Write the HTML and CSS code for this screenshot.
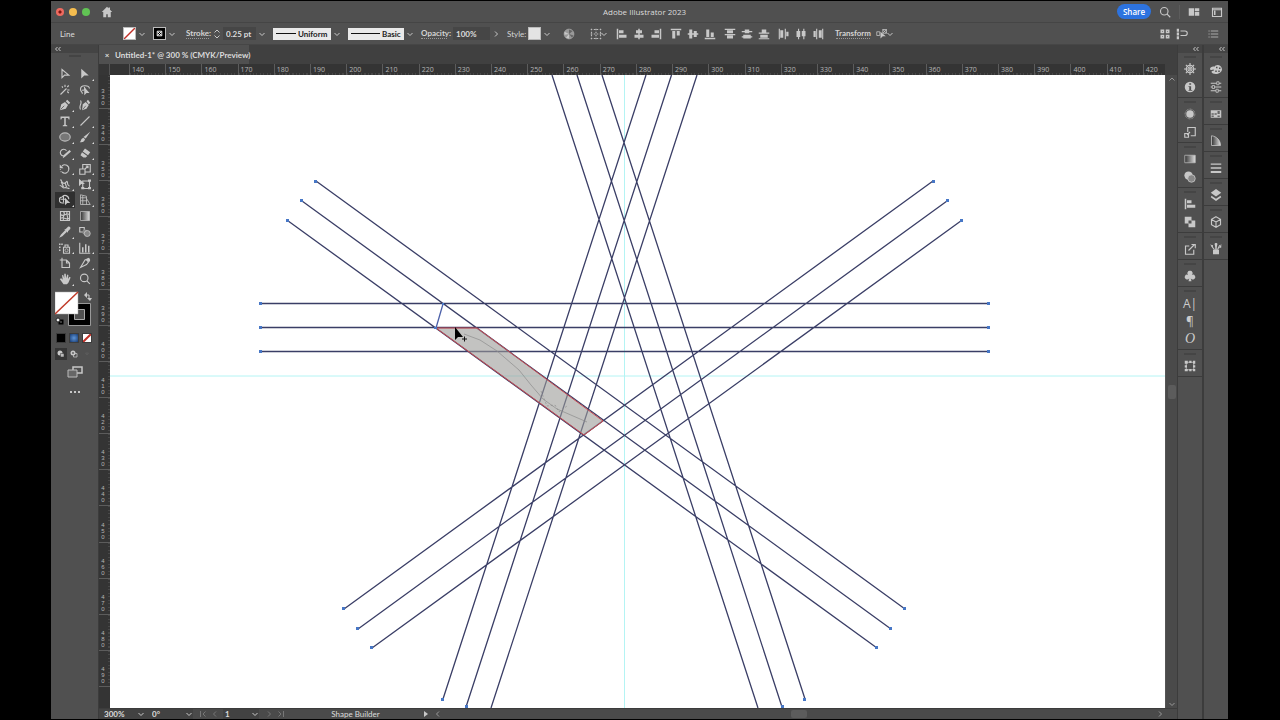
FILE: index.html
```html
<!DOCTYPE html>
<html lang="en">
<head>
<meta charset="utf-8">
<title>Adobe Illustrator 2023</title>
<link rel="stylesheet" href="styles.css">
</head>
<body>
<svg class="defs" aria-hidden="true">
  <symbol id="chev" viewBox="0 0 8 8"><path class="s" d="M1.5 3 4 5.5 6.5 3"/></symbol>
  <symbol id="next" viewBox="0 0 8 8"><path class="s" d="M3 1.5 5.5 4 3 6.5"/></symbol>
  <symbol id="up" viewBox="0 0 8 8"><path class="s" d="M1.5 5.500 4 3l2.500 2.500"/></symbol>
  <symbol id="prev" viewBox="0 0 8 8"><path class="s" d="M5 1.5 2.5 4 5 6.5"/></symbol>
  <symbol id="first" viewBox="0 0 8 8"><path class="s" d="M1.5 1v6M6.5 1.5 4 4l2.500 2.500"/></symbol>
  <symbol id="last" viewBox="0 0 8 8"><path class="s" d="M6.500 1v6M1.500 1.500 4 4 1.500 6.500"/></symbol>
  <symbol id="spin" viewBox="0 0 8 12"><path class="s" d="M1.500 4.500 4 2l2.500 2.500M1.500 7.500 4 10l2.500-2.500"/></symbol>
  <symbol id="dbl" viewBox="0 0 8 8"><path class="s" d="M3.500 2 1.500 4l2 2M6.500 2l-2 2 2 2"/></symbol>
</svg>
<div class="app">
  <header class="titlebar">
    <div class="titleleft">
      <div class="lights"><i class="red"></i><i class="amber"></i><i class="green"></i></div>
      <button class="ib home" aria-label="Home"><svg viewBox="0 0 16 16"><path class="f" d="M8 1 1 8h2v7h4v-4h2v4h4V8h2L12 5V2h-2v1z"/></svg></button>
    </div>
    <h1>Adobe Illustrator 2023</h1>
    <div class="titleright">
      <button class="share">Share</button>
      <button class="ib" aria-label="Search"><svg viewBox="0 0 16 16"><circle class="s2" cx="7" cy="7" r="5"/><path class="s2" d="m10.500 10.500 4.500 4.500"/></svg></button>
      <i class="rule"></i>
      <button class="ib" aria-label="Arrange documents"><svg viewBox="0 0 16 16"><path class="f" d="M1 3h7v10H1zM9 3h6v4H9zM9 8h6v5H9z"/></svg></button>
      <button class="ib" aria-label="Workspace"><svg viewBox="0 0 16 16"><path class="s2" d="M2 3h12v11H2zM2 5h12"/><path class="f" d="M4 6h2v6H4z"/></svg></button>
    </div>
  </header>

  <div class="options">
    <span class="kind">Line</span>
    <button class="swatch none" aria-label="Fill"><svg viewBox="0 0 12 12"><path d="M0 12 12 0" stroke="#c03028" stroke-width="1.500"/></svg></button>
    <svg class="cv"><use href="#chev"/></svg>
    <button class="swatch blackbox" aria-label="Stroke color"><svg viewBox="0 0 12 12"><path d="M3.500 3.500h5v5h-5zM4 4l4 4M8 4 4 8" stroke="#fff" fill="none"/></svg></button>
    <svg class="cv"><use href="#chev"/></svg>
    <label class="lk stroke" for="sw">Stroke:</label>
    <svg class="spin"><use href="#spin"/></svg>
    <input id="sw" class="field" value="0.25 pt">
    <svg class="cv"><use href="#chev"/></svg>
    <span class="profile"><i></i><select aria-label="Width profile"><option>Uniform</option></select></span>
    <svg class="cv"><use href="#chev"/></svg>
    <span class="profile basic"><i></i><select aria-label="Brush"><option>Basic</option></select></span>
    <svg class="cv"><use href="#chev"/></svg>
    <label class="lk op" for="op">Opacity:</label>
    <input id="op" class="field wide" value="100%">
    <svg class="cv"><use href="#next"/></svg>
    <span class="lk style">Style:</span>
    <button class="swatch grey" aria-label="Style"></button>
    <svg class="cv"><use href="#chev"/></svg>
    <button class="ib globe" aria-label="Recolor artwork"><svg viewBox="0 0 16 16"><circle cx="8" cy="8" r="6.500" fill="#999" stroke="#aaa"/><path d="M8 8V2l5 2zM8 8l6 2-2 3z" fill="#666"/><path class="f" d="M8 8 2 5v4zM8 8l-4 5 4 1z"/></svg></button>
    <button class="ib" aria-label="Align to"><svg viewBox="0 0 16 16"><path d="M1 2h14M1 8h14M1 14h14M2 1v14M8 1v14M14 1v14" stroke="#bbb" stroke-width="1.500" stroke-dasharray="2 2"/></svg></button>
    <svg class="cv tight"><use href="#chev"/></svg>
    <div class="aligns">
      <button class="ib" aria-label="Align left"><svg viewBox="0 0 16 16"><path class="f" d="M1 1h2v14H1zM4 3h6v4H4zM4 9h10v4H4z"/></svg></button>
      <button class="ib" aria-label="Align center"><svg viewBox="0 0 16 16"><path class="f" d="M7 1h2v14H7zM4 3h8v4H4zM2 9h12v4H2z"/></svg></button>
      <button class="ib" aria-label="Align right"><svg viewBox="0 0 16 16"><path class="f" d="M13 1h2v14h-2zM6 3h6v4H6zM2 9h10v4H2z"/></svg></button>
    </div>
    <div class="aligns">
      <button class="ib" aria-label="Align top"><svg viewBox="0 0 16 16"><path class="f" d="M1 1h14v2H1zM3 4h4v10H3zM9 4h4v6H9z"/></svg></button>
      <button class="ib" aria-label="Align middle"><svg viewBox="0 0 16 16"><path class="f" d="M1 7h14v2H1zM3 2h4v12H3zM9 4h4v8H9z"/></svg></button>
      <button class="ib" aria-label="Align bottom"><svg viewBox="0 0 16 16"><path class="f" d="M1 13h14v2H1zM3 2h4v10H3zM9 6h4v6H9z"/></svg></button>
    </div>
    <div class="aligns">
      <button class="ib" aria-label="Distribute top"><svg viewBox="0 0 16 16"><path class="f" d="M1 1h14v1.500H1zM4 3h8v4H4zM1 8h14v1.500H1zM4 10h8v4H4z"/></svg></button>
      <button class="ib" aria-label="Distribute middle"><svg viewBox="0 0 16 16"><path class="f" d="M1 4h14v1.500H1zM5 2h6v5H5zM1 11h14v1.500H1zM3 9h10v5H3z"/></svg></button>
      <button class="ib" aria-label="Distribute bottom"><svg viewBox="0 0 16 16"><path class="f" d="M1 6h14v1.500H1zM5 2h6v4H5zM1 13.500h14V15H1zM3 9h10v4H3z"/></svg></button>
    </div>
    <div class="aligns">
      <button class="ib" aria-label="Distribute left"><svg viewBox="0 0 16 16"><path class="f" d="M1 1h1.500v14H1zM3 3h4v10H3zM9 1h1.500v14H9zM11 5h3v6h-3z"/></svg></button>
      <button class="ib" aria-label="Distribute center"><svg viewBox="0 0 16 16"><path class="f" d="M4 1h1.500v14H4zM2 4h5v8H2zM11 1h1.500v14H11zM9 4h5v7H9z"/></svg></button>
      <button class="ib" aria-label="Distribute right"><svg viewBox="0 0 16 16"><path class="f" d="M5.500 1H7v14H5.500zM2 4h3v8H2zM13.500 1H15v14h-1.500zM9 3h4v10H9z"/></svg></button>
    </div>
    <button class="lk transform">Transform</button>
    <button class="ib" aria-label="Isolate"><svg viewBox="0 0 16 16"><path class="s" d="M1 5h4v5H1zM9 2h5v5H9zM9 2l5 5M14 2 9 7"/><path class="f" d="m6 5 7 6H9l-3 3z"/></svg></button>
    <svg class="cv tight"><use href="#chev"/></svg>
    <div class="optright">
      <button class="ib" aria-label="Pixel grid"><svg viewBox="0 0 16 16"><path class="f" d="M2 2h5v5H2zM9 2h5v5H9zM2 9h5v5H2zM9 9h5v5H9z"/><path d="M4 4h1v1H4zM11 4h1v1h-1zM4 11h1v1H4zM11 11h1v1h-1z" fill="#505050"/></svg></button>
      <button class="ib" aria-label="Snap"><svg viewBox="0 0 16 16"><path class="f" d="M1 1h3v4H1zM1 6h3v4H1zM1 11h3v4H1z"/><path class="s2" d="M6 4h6a3 3 0 0 1 0 6H6"/></svg></button>
      <button class="ib list" aria-label="Panel menu"><svg viewBox="0 0 16 16"><path class="s" d="M5 4h10M5 8h10M5 12h10M2 4h1.500M2 8h1.500M2 12h1.500"/></svg></button>
    </div>
  </div>

  <div class="body">
    <aside class="tools">
      <div class="collapse"><svg><use href="#dbl"/></svg></div>
      <div class="panel">
        <i class="grip"></i>
        <div class="toolgrid">
          <button aria-label="Selection"><svg viewBox="0 0 16 16"><path class="s2" d="M4 2v11l3.500-3.500H13z"/></svg></button>
          <button class="more" aria-label="Direct selection"><svg viewBox="0 0 16 16"><path class="f" d="M3 1v13l4-4h6z"/></svg></button>
          <button aria-label="Magic wand"><svg viewBox="0 0 16 16"><path class="s2" d="m2 14 8-8M8 1v3M14 8h-3M13 2l-2 2M4 3l1 2M13 12l-2-2"/></svg></button>
          <button aria-label="Lasso"><svg viewBox="0 0 16 16"><path class="s2" d="M4 13c2-2-2-2-2-6 0-6 11-6 12-1M4 8c3 1 5-1 3-4"/><path class="f" d="M7 4v11l3-3h4z"/></svg></button>
          <button class="more" aria-label="Pen"><svg viewBox="0 0 16 16"><path class="f" d="M1 15 3 7l5-3 4 4-3 5zM9 3l2-2 4 4-2 2z"/><path d="m2 14 5-5" stroke="#505050"/></svg></button>
          <button aria-label="Curvature"><svg viewBox="0 0 16 16"><path class="s2" d="M2 2c3 4-3 7 0 12"/><path class="f" d="m4 15 1-8 4-3 4 4-3 5zM10 3l2-2 3 4-2 2z"/><path d="m5 14 4-5" stroke="#505050"/></svg></button>
          <button class="more" aria-label="Type"><svg viewBox="0 0 16 16"><path class="f" d="M2 2h12v4h-1l-1-2H9v9l2 1v1H5v-1l2-1V4H4L3 6H2z"/></svg></button>
          <button class="more" aria-label="Line segment"><svg viewBox="0 0 16 16"><path class="s2" d="M2 14 14 2"/></svg></button>
          <button class="more" aria-label="Ellipse"><svg viewBox="0 0 16 16"><ellipse cx="8" cy="8" rx="7" ry="5.500" fill="#777" stroke="#bbb" stroke-width="1.500"/></svg></button>
          <button class="more" aria-label="Paintbrush"><svg viewBox="0 0 16 16"><path class="f" d="M15 1 9 10 6 8zM6 9l2 2c-1 4-4 4-7 4 2-1 1-5 5-6z"/></svg></button>
          <button class="more" aria-label="Shaper"><svg viewBox="0 0 16 16"><path class="s2" d="M6 12a4.500 4.500 0 1 1 4-7"/><path class="f" d="m5 15 1-4 8-7 2 2-8 7z"/></svg></button>
          <button class="more" aria-label="Eraser"><svg viewBox="0 0 16 16"><path class="f" d="m8 2 7 5-3 4-7-5zM4 7l7 5-2 2H6l-4-3z"/></svg></button>
          <button class="more" aria-label="Rotate"><svg viewBox="0 0 16 16"><path class="s2" d="M4 4c4-4 10 0 9 5s-6 6-9 3"/><path class="s2" stroke-dasharray="1 2" d="M3 12c-2-3-1-6 1-8"/><path class="f" d="M1 2v5h5z"/></svg></button>
          <button class="more" aria-label="Scale"><svg viewBox="0 0 16 16"><path class="s2" d="M1 8h7v7H1zM5 8V2h10v10H8M8 8l4-4M9 4h3v3"/></svg></button>
          <button class="more" aria-label="Width"><svg viewBox="0 0 16 16"><path class="s2" d="M2 2c2 2 1 4 4 5s4-4 5-2-1 4 3 6M1 10c4 0 3 4 6 3s4 1 7 1M3 5l3 7M8 6l2 6"/></svg></button>
          <button class="more" aria-label="Free transform"><svg viewBox="0 0 16 16"><path class="s2" d="M5 4h9v10H5z"/><path class="f" d="M0 1v10l3-3h5zM12 2h4v3h-4zM12 12h4v3h-4zM3 12h4v3H3z"/></svg></button>
          <button class="more active" aria-label="Shape builder"><svg viewBox="0 0 16 16"><path class="s2" d="M7 12H5a4 4 0 0 1-1-8c3-4 9-2 9 3M2 7h7M6 3v8"/><path class="f" d="M8 5v10l3-3h4z"/></svg></button>
          <button class="more" aria-label="Perspective grid"><svg viewBox="0 0 16 16"><path class="s" d="M2 1v13h13M2 1l8 2v11M2 5h8M2 9h9M5 2v12M10 6l5 8"/></svg></button>
          <button aria-label="Mesh"><svg viewBox="0 0 16 16"><path class="s2" d="M2 2h12v12H2zM2 6c4 4 7-3 12 0M2 11c4-3 7 3 12 0M6 2c4 4-3 7 0 12M11 2c-3 4 3 7 0 12"/></svg></button>
          <button aria-label="Gradient"><svg viewBox="0 0 16 16"><defs><linearGradient id="g"><stop stop-color="#333"/><stop offset="1" stop-color="#ddd"/></linearGradient></defs><path d="M2 2h12v12H2z" fill="url(#g)" stroke="#bbb"/></svg></button>
          <button class="more" aria-label="Eyedropper"><svg viewBox="0 0 16 16"><path class="s2" d="m9 6-6 6-1 2 2-1 6-6"/><path class="f" d="m7 5 2-1 3-3c2-1 4 1 3 3l-3 3v2z"/></svg></button>
          <button aria-label="Blend"><svg viewBox="0 0 16 16"><path class="s2" d="M1 2h6v6H1z"/><circle cx="8" cy="8" r="3.500" fill="#888"/><circle cx="11" cy="10" r="4" fill="#888" stroke="#ccc"/></svg></button>
          <button class="more" aria-label="Symbol sprayer"><svg viewBox="0 0 16 16"><path class="s2" d="M6 7h8v8H6zM8 7V4h4v3"/><circle class="s" cx="10" cy="11" r="2"/><path class="f" d="M0 2h2v2H0zM3 2h2v2H3zM0 6h2v2H0zM0 10h2v2H0z"/></svg></button>
          <button class="more" aria-label="Graph"><svg viewBox="0 0 16 16"><path class="s2" d="M1 1v14h14"/><path class="f" d="M4 7h2v7H4zM8 3h2v11H8zM12 5h2v9h-2z"/></svg></button>
          <button aria-label="Artboard"><svg viewBox="0 0 16 16"><path class="s2" d="M4 1v4M1 4h9l4 4v6H4V4M10 4v4h4"/></svg></button>
          <button class="more" aria-label="Slice"><svg viewBox="0 0 16 16"><path class="s2" d="m2 14 6-10 5-2 1 3-4 5z"/><path class="f" d="m9 4 4-3 2 3-3 3z"/></svg></button>
          <button class="more" aria-label="Hand"><svg viewBox="0 0 16 16"><path class="f" d="m1 8 2-1 2 2-1-6 1.500-.5L7 7V1h2l.5 6L11 2l1.500.5L12 8l2-3 1.500 1-3 7-2 2H6z"/></svg></button>
          <button aria-label="Zoom"><svg viewBox="0 0 16 16"><circle class="s2" cx="7" cy="6.500" r="5"/><path class="s2" d="m10.500 10.500 4 4"/></svg></button>
        </div>
        <svg class="paint" viewBox="0 0 40 40" role="img" aria-label="Fill and stroke">
          <path d="M17 17h15v15H17z" fill="none" stroke="#000" stroke-width="6"/><path d="M13.500 13.500h22v22h-22z" fill="none" stroke="#999"/><path d="M19.500 19.500h10v10h-10z" fill="#505050" stroke="#aaa"/>
          <path d="M0 2h23v22H0z" fill="#fff" stroke="#aaa" stroke-width=".5"/><path d="M0 24 23 2" stroke="#c03a28" stroke-width="1.500"/>
          <path d="M31 5h3v4" class="s"/><path class="f" d="m32 2-3 3 3 3zM32 8h5l-2 3z"/>
          <path d="M4.500 30.500h3v3h-3z" fill="#eee" stroke="#000" stroke-width="2"/><circle cx="3" cy="30" r="2" fill="#eee" stroke="#222"/>
        </svg>
        <div class="modes">
          <button class="m black" aria-label="Color"></button>
          <button class="m grad" aria-label="Gradient fill"></button>
          <button class="m none" aria-label="None"><svg viewBox="0 0 8 8"><path d="M0 8 8 0" stroke="#c03028" stroke-width="2"/></svg></button>
        </div>
        <div class="modes draw">
          <button class="d on" aria-label="Draw normal"><svg viewBox="0 0 16 16"><circle class="f" cx="6" cy="6" r="5"/><path d="M7 7h7v7H7z" fill="#bbb" stroke="#333"/></svg></button>
          <button class="d" aria-label="Draw behind"><svg viewBox="0 0 16 16"><path class="s2" d="M7 7h7v7H7z"/><circle class="f" cx="6" cy="6" r="5"/><circle cx="6" cy="6" r="2" fill="#666"/></svg></button>
          <button class="d dim" aria-label="Draw inside"><svg viewBox="0 0 16 16"><path class="s" d="M5 6h6l-3 4z"/></svg></button>
        </div>
        <button class="screen" aria-label="Screen mode"><svg viewBox="0 0 16 12"><path d="M6 1h9v6H6z" class="s2"/><path d="M1 4h9v7H1z" fill="#666" stroke="#bbb"/></svg></button>
        <button class="screen dots" aria-label="Edit toolbar"><svg viewBox="0 0 16 12"><path class="f" d="M3 5h2v2H3zM7 5h2v2H7zM11 5h2v2h-2z"/></svg></button>
      </div>
    </aside>

    <main class="doc">
      <div class="tabs"><div class="tab"><button class="close" aria-label="Close">×</button><span>Untitled-1* @ 300 % (CMYK/Preview)</span></div></div>
      <div class="corner"></div>
      <div class="hruler"><div class="hcells">
        <span>140</span><span>150</span><span>160</span><span>170</span><span>180</span><span>190</span><span>200</span><span>210</span><span>220</span><span>230</span><span>240</span><span>250</span><span>260</span><span>270</span><span>280</span><span>290</span><span>300</span><span>310</span><span>320</span><span>330</span><span>340</span><span>350</span><span>360</span><span>370</span><span>380</span><span>390</span><span>400</span><span>410</span><span>420</span>
      </div></div>
      <div class="vruler"><div class="vcells">
        <span>330</span><span>340</span><span>350</span><span>360</span><span>370</span><span>380</span><span>390</span><span>400</span><span>410</span><span>420</span><span>430</span><span>440</span><span>450</span><span>460</span><span>470</span><span>480</span><span>490</span>
      </div></div>
      <div class="canvas">
        <svg viewBox="110 75 1055 633" preserveAspectRatio="xMidYMid slice" role="img" aria-label="Artwork">
          <path class="guide" d="M624.500 75v633M110 376h1055"/>
          <path class="art" d="M260 303.500h729M260 327.500h729M260 351.500h729M316 181l589 428M302 201l589 428M287.500 220.500 877 648M933 181 344 609M947 201 358 629M961.500 220.500 372 648M646 75 443 699M671.500 75 466 707M697 75 491 708M602 75 805 699M577 75 782 707M552 75 758 708"/>
          <path class="art blue" d="m443 304-7 24"/>
          <path class="build" d="M436 328h41l126 93-19 14z"/>
          <path class="drag" d="m464 334 16 6 17 11 22 19 12 15 12 14 14 10 30 13"/>
          <path class="drag" stroke-dasharray="2 2" d="m541 391 6 15 8-1 4 7 8-6"/>
          <path class="pts" d="M259 302h3v3h-3zM259 326h3v3h-3zM259 350h3v3h-3zM987 302h3v3h-3zM987 326h3v3h-3zM987 350h3v3h-3zM314 180h3v3h-3zM300 199h3v3h-3zM286 219h3v3h-3zM932 180h3v3h-3zM946 199h3v3h-3zM960 219h3v3h-3zM342 607h3v3h-3zM356 627h3v3h-3zM370 646h3v3h-3zM903 607h3v3h-3zM889 627h3v3h-3zM875 646h3v3h-3zM441 698h3v3h-3zM465 705h3v3h-3zM803 698h3v3h-3zM781 705h3v3h-3zM442 303h2v2h-2zM434 327h3v2h-3z"/>
          <path d="M455 327v13l3-3h5z" fill="#000"/><path d="M464.500 336.500v5M462 339h5" stroke="#111" fill="none"/>
        </svg>
      </div>
      <div class="vscroll"><svg><use href="#up"/></svg><i></i><svg><use href="#chev"/></svg></div>
      <footer class="status">
        <div class="zoom"><input aria-label="Zoom level" value="300%"><svg><use href="#chev"/></svg></div>
        <div class="angle"><input aria-label="Rotation" value="0°"><svg><use href="#chev"/></svg></div>
        <div class="pager"><svg><use href="#first"/></svg><svg><use href="#prev"/></svg></div>
        <div class="page"><input aria-label="Artboard number" value="1"><svg><use href="#chev"/></svg></div>
        <div class="pager"><svg><use href="#next"/></svg><svg><use href="#last"/></svg></div>
        <span class="toolname">Shape Builder</span>
        <svg viewBox="0 0 8 8"><path class="f" d="m2 1 4 3-4 3z"/></svg>
        <div class="hscroll"><svg><use href="#prev"/></svg><i></i><svg><use href="#next"/></svg></div>
      </footer>
    </main>

    <aside class="dock">
      <div class="col">
        <div class="collapse"><svg><use href="#dbl"/></svg></div>
        <div class="grp">
          <button aria-label="Properties"><svg viewBox="0 0 16 16"><circle class="s2" cx="8" cy="8" r="5"/><circle class="s2" cx="8" cy="8" r="1.500"/><path class="s2" d="M8 0v6M8 10v6M0 8h6M10 8h6M2.500 2.500l4 4M9.500 9.500l4 4M13.500 2.500l-4 4M6.500 9.500l-4 4"/></svg></button>
          <button aria-label="Document info"><svg viewBox="0 0 16 16"><circle class="f" cx="8" cy="8" r="7"/><path d="M7 3h2.500v2H7zM6 7h3.500v5H11v1H6v-1h1V8H6z" fill="#505050"/></svg></button>
        </div>
        <div class="grp">
          <button aria-label="Appearance"><svg viewBox="0 0 16 16"><circle class="f" cx="8" cy="8" r="5"/><circle class="s" cx="8" cy="8" r="6.500" stroke-dasharray="1 1"/></svg></button>
          <button aria-label="Asset export"><svg viewBox="0 0 16 16"><path class="s2" d="M5 8V2h10v11H9M1 10h5v5H1zM4 12l4-4"/></svg></button>
        </div>
        <div class="grp">
          <button aria-label="Gradient panel"><svg viewBox="0 0 16 16"><path d="M1 3h14v10H1z" fill="url(#g)" stroke="#bbb"/></svg></button>
          <button aria-label="Transparency"><svg viewBox="0 0 16 16"><circle class="f" cx="6" cy="6" r="5.500"/><circle cx="10" cy="10" r="5" fill="#888" stroke="#ccc"/></svg></button>
        </div>
        <div class="grp">
          <button aria-label="Align"><svg viewBox="0 0 16 16"><path class="f" d="M1 1h2v14H1zM4 3h6v4H4zM4 9h11v4H4z"/></svg></button>
          <button aria-label="Pathfinder"><svg viewBox="0 0 16 16"><path class="f" d="M1 1h9v9H1zM6 6h9v9H6z"/><path d="M6 6h4v4H6z" fill="#555"/></svg></button>
        </div>
        <div class="grp"><button aria-label="Export"><svg viewBox="0 0 16 16"><path class="s2" d="M7 4H2v11h11V9M6 10l8-8M10 2h5v5"/></svg></button></div>
        <div class="grp"><button aria-label="Symbols"><svg viewBox="0 0 16 16"><path class="f" d="M8 1a3.200 3.200 0 0 1 2.500 5.500A3.200 3.200 0 1 1 9 11l1 4H6l1-4a3.200 3.200 0 1 1-1.500-4.500A3.200 3.200 0 0 1 8 1z"/></svg></button></div>
        <div class="grp">
          <button aria-label="Character">A|</button>
          <button aria-label="Paragraph">¶</button>
          <button class="ot" aria-label="OpenType">O</button>
        </div>
        <div class="grp"><button aria-label="Transform panel"><svg viewBox="0 0 16 16"><path class="s" d="M3 3h10v10H3z"/><path class="f" d="M1 1h4v4H1zM7 1h3v3H7zM12 1h3v4h-3zM1 7h3v3H1zM12 7h3v3h-3zM1 12h4v3H1zM7 12h3v3H7zM12 12h3v3h-3z"/></svg></button></div>
      </div>
      <div class="col">
        <div class="collapse"><svg><use href="#dbl"/></svg></div>
        <div class="grp">
          <button aria-label="Color panel"><svg viewBox="0 0 16 16"><path class="f" d="M0 8c0-3 4-4 6-3 1-3 9-4 10 3 0 8-13 8-14 4 0-2 4-1 3-3-1-1-4 2-5-1z"/><path d="M8 5h2v2H8zM12 6h2v2h-2zM11 10h2v2h-2zM7 10h2v2H7z" fill="#505050"/></svg></button>
          <button aria-label="Color guide"><svg viewBox="0 0 16 16"><path class="s2" d="M1 3h14M1 8h14M1 13h14"/><path d="M9 1h3v4H9zM3 6h3v4H3zM8 11h3v4H8z" fill="#505050" stroke="#ccc"/></svg></button>
        </div>
        <div class="grp"><button aria-label="Swatches"><svg viewBox="0 0 16 16"><path class="f" d="M1 3h14v10H1z"/><path d="M2 7h3v2H2zM6 7h3v2H6zM10 4h3v4h-3zM2 10h3v2H2zM10 10h3v2h-3z" fill="#666"/></svg></button></div>
        <div class="grp"><button aria-label="Gradient guide"><svg viewBox="0 0 16 16"><path d="M2 1c7 1 12 6 12 13H2z" fill="url(#g)" stroke="#ccc"/></svg></button></div>
        <div class="grp"><button aria-label="Stroke panel"><svg viewBox="0 0 16 16"><path class="f" d="M1 2h14v1.500H1zM1 7h14v2H1zM1 12h14v2.500H1z"/></svg></button></div>
        <div class="grp"><button aria-label="Layers"><svg viewBox="0 0 16 16"><path class="f" d="m8 0 7 5-7 5-7-5zM2 9l6 4 6-4 1 2-7 5-7-5z"/></svg></button></div>
        <div class="grp"><button aria-label="3D"><svg viewBox="0 0 16 16"><path class="s2" d="m8 1 6 3.500v7L8 15l-6-3.500v-7zM2 4.500 8 8l6-3.500M8 8v7"/></svg></button></div>
        <div class="grp"><button aria-label="Brushes"><svg viewBox="0 0 16 16"><path class="f" d="M4 9h8v6H4zM7 0h2v9H7z"/><path class="s2" d="M6 9 2 4M10 9l3-6"/><path class="f" d="m0 2 4 1v3zM15 1v5l-3 1zM6 1l2-1 2 1-1 4H7z"/></svg></button></div>
      </div>
    </aside>
  </div>
</div>
</body>
</html>
```
FILE: styles.css
```css
* { box-sizing: border-box; }
html, body { height: 100%; margin: 0; background: #000; }
body { padding: 1px 52px 1px 51px; font: 8px/12px Lato, "Open Sans", sans-serif; color: #dcdcdc; }
button, input, select { font: inherit; color: inherit; background: none; border: 0; padding: 0; margin: 0; min-width: 0; appearance: none; border-radius: 0; }
button { display: flex; align-items: center; justify-content: center; flex: none; }
svg { display: block; flex: none; color: #c8c8c8; width: 8px; height: 8px; }
.defs { position: absolute; width: 0; height: 0; }
.s { fill: none; stroke: currentColor; stroke-width: 1; }
.s2 { fill: none; stroke: currentColor; stroke-width: 1.5; }
.f { fill: currentColor; }

.app { height: 100%; display: flex; flex-direction: column; background: #505050; }
.titlebar { height: 22px; flex: none; display: grid; grid-template-columns: 1fr auto 1fr; align-items: center; padding: 0 5px; border-bottom: 1px solid #454545; }
.titleleft, .lights { display: flex; align-items: center; gap: 5px; }
.lights i { width: 8px; height: 8px; border-radius: 50%; }
.red { background: radial-gradient(#7a1512 20%, #ee6a5f 35%); }
.amber { background: #f5bd4f; }
.green { background: #61c454; }
.ib { width: 12px; height: 12px; }
.ib svg { width: 12px; height: 12px; }
.home { margin-left: 6px; }
h1 { margin: 0 0 0 10px; font: 400 8px/12px "Open Sans", sans-serif; }
.titleright { display: flex; align-items: center; justify-content: flex-end; gap: 8px; }
.share { width: 34px; height: 15px; border-radius: 8px; background: #2d73df; color: #fff; font-family: "Open Sans", sans-serif; font-weight: 600; }
.rule { width: 1px; height: 14px; background: #5c5c5c; }
.titleright .ib:last-child { margin-left: 3px; }

.options { height: 22px; flex: none; display: flex; align-items: center; padding: 0 9px; border-bottom: 1px solid #464646; }
.kind { width: 63px; }
.swatch { width: 13px; height: 13px; border: 1px solid #bbb; }
.swatch svg { width: 11px; height: 11px; }
.none { background: #fff; }
.blackbox { background: #000; }
.grey { background: #e4e4e4; margin-left: 4px; }
.cv { margin: 0 7px 0 2px; }
.lk { border-bottom: 1px dotted #999; line-height: 10px; font-weight: 700; color: #d4d4d4; white-space: nowrap; }
.blackbox + .cv { margin-right: 10px; }
.stroke { width: 23px; }
.spin { height: 12px; margin: 0 2px 0 4px; }
.field { width: 33px; height: 13px; background: #464646; padding-left: 3px; font-weight: 700; }
.wide { width: 37px; }
.profile { width: 58px; height: 12px; background: #e9e9e9; color: #222; display: flex; align-items: center; gap: 2px; padding: 0 3px; flex: none; }
.profile i { flex: 1; height: 1px; background: #111; }
.profile select { font-weight: 700; width: auto; }
.basic { width: 56px; }
.op { width: 26px; margin-right: 6px; }
.style { width: 17px; border: 0; font-weight: 400; }
.globe { margin: 0 15px 0 5px; }
.tight { margin: 0 0 0 -2px; }
.aligns { display: flex; gap: 5px; margin-left: 8px; }
.transform { width: 34px; margin: 0 6px 0 12px; }
.optright { display: flex; gap: 5px; margin-left: auto; }
.list { margin-left: 14px; }

.body { flex: 1; min-height: 0; display: grid; grid-template-columns: 48px 1fr 51px; background: #404040; }
.tools { display: flex; flex-direction: column; border-right: 1px solid #3c3c3c; }
.collapse { height: 8px; flex: none; background: #444; padding-left: 3px; }
.panel { flex: 1; background: #505050; padding: 2px 4px 0; }
.grip { display: block; width: 12px; height: 2px; margin: 0 auto 9px; background: #444; }
.toolgrid { height: 221px; display: grid; grid-template-columns: 20px 20px; grid-template-rows: repeat(14, 1fr); }
.toolgrid button { position: relative; }
.toolgrid svg { width: 12px; height: 12px; }
.more::after { content: ""; position: absolute; right: 1px; bottom: 1px; border-left: 2px solid transparent; border-bottom: 2px solid #ddd; }
.active { background: #303030; }
.paint { width: 40px; height: 40px; margin-top: 3px; }
.modes { width: 38px; height: 16px; display: flex; justify-content: space-between; align-items: center; padding: 0 2px; }
.m { width: 8px; height: 8px; outline: 1px solid #3c3c3c; }
.m svg { width: 8px; height: 8px; }
.black { background: #000; }
.grad { background: radial-gradient(#5d94d8, #173a70); }
.draw { padding: 0; }
.d { width: 12px; height: 12px; }
.on { background: #363636; }
.dim svg { color: #666; }
.screen { width: 100%; height: 20px; }
.screen svg { width: 16px; height: 12px; }

.doc { min-width: 0; min-height: 0; display: grid; grid-template-columns: 11px minmax(0, 1fr) 12px; grid-template-rows: 19px 11px minmax(0, 1fr) 11px; }
.tabs { grid-column: 1 / -1; display: flex; }
.tab { width: 150px; background: #505050; display: flex; align-items: center; gap: 5px; padding: 0 5px; font-weight: 700; white-space: nowrap; }
.close { width: 6px; }
.corner { background: #363636; border-right: 1px solid #555; }
.hruler { background: #343434; overflow: hidden; padding-left: 19px; margin-right: 12px; grid-column: 2 / 4; }
.hcells { width: 1050px; display: grid; grid-template-columns: repeat(29, 1fr); height: 11px; }
.hcells span { border-left: 1px solid #5c5c5c; padding-left: 2px; font: 7px/11px "Open Sans", sans-serif; color: #b4b4b4; background: repeating-linear-gradient(90deg, #484848 0 1px, transparent 1px 10%) 0 100% / 100% 2px no-repeat; }
.vruler { background: #343434; overflow: hidden; }
.vcells { height: 614px; margin-top: -2px; display: grid; grid-template-rows: repeat(17, 1fr); }
.vcells span { border-bottom: 1px solid #5c5c5c; writing-mode: vertical-rl; text-orientation: upright; text-align: right; font: 6px/7px "Liberation Sans", sans-serif; color: #b4b4b4; padding: 0 4px 2px 0; background: repeating-linear-gradient(#484848 0 1px, transparent 1px 10%) 100% 0 / 2px 100% no-repeat; }
.canvas { background: #fff; overflow: hidden; }
.canvas svg { width: 100%; height: 100%; }
.guide { fill: none; stroke: #b4f4f4; }
.art { fill: none; stroke: #3a3e66; stroke-width: 1.3; }
.art.blue { stroke: #4a5fa8; }
.build { fill: #9b9b97; fill-opacity: .6; stroke: #c84850; }
.drag { fill: none; stroke: #8c8c8c; stroke-width: .7; }
.pts { fill: #4777c6; }
.vscroll { background: #4a4a4a; display: flex; flex-direction: column; align-items: center; border-left: 1px solid #555; grid-column: 3; grid-row: 3; }
.vscroll svg, .hscroll svg { color: #999; }
.vscroll i { width: 8px; height: 14px; background: #5c5c5c; margin: auto; border-radius: 2px; }
.status { grid-column: 1 / -1; display: flex; align-items: center; background: #4a4a4a; border-top: 1px solid #3c3c3c; line-height: 10px; font-weight: 700; }
.status input { flex: 1; width: 0; height: 10px; }
.status > div:not(.hscroll) { display: flex; align-items: center; }
.zoom { width: 46px; padding-left: 5px; background: #424242; }
.angle { width: 48px; padding-left: 7px; background: #424242; }
.pager { width: 30px; gap: 4px; padding-left: 6px; }
.pager svg { color: #777; }
.page { width: 36px; padding-left: 2px; background: #424242; }
.toolname { width: 133px; text-align: center; font-weight: 400; }
.hscroll { flex: 1; display: flex; align-items: center; margin-left: 4px; padding-right: 13px; }
.hscroll i { width: 16px; height: 8px; margin: auto; background: #5c5c5c; border-radius: 2px; }

.dock { display: grid; grid-template-columns: 1fr 1fr; gap: 2px; background: #3c3c3c; padding-left: 1px; }
.col { background: #505050; }
.dock .collapse { padding-left: 14px; }
.grp { padding: 7px 0 1px; border-bottom: 1px solid #3c3c3c; background: linear-gradient(#454545, #454545) 50% 3px / 12px 2px no-repeat; }
.grp button { width: 100%; height: 18px; font: 12px "Open Sans", sans-serif; color: #ccc; }
.grp svg { width: 12px; height: 12px; }
.grp .ot { font-family: "Liberation Serif", serif; font-style: italic; font-size: 14px; }
```
